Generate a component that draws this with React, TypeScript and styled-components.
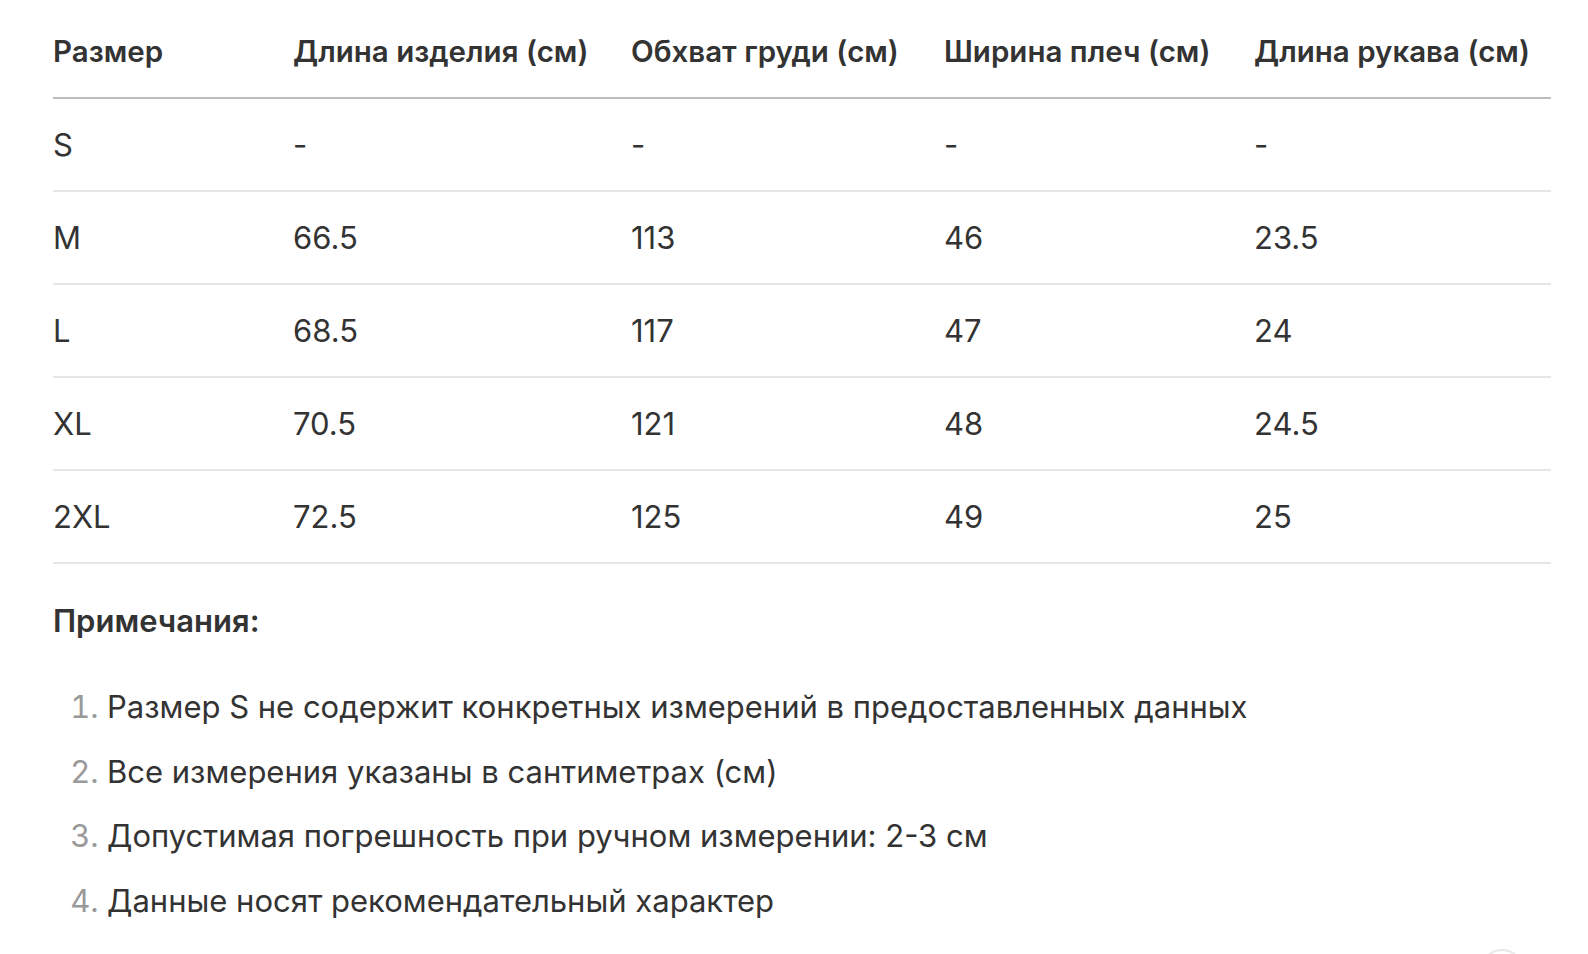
import React from "react";
import styled, { createGlobalStyle } from "styled-components";

const Global = createGlobalStyle`
  html, body { margin: 0; padding: 0; background: #fff; }
  body { font-family: Inter, "Noto Sans", "Liberation Sans", sans-serif; color: #333; overflow: hidden; }
`;

const Page = styled.div`
  position: relative;
  width: 1588px;
  height: 954px;
  box-sizing: border-box;
  padding: 0 37px 0 53px;
  overflow: hidden;
`;

const Table = styled.table`
  width: 100%;
  border-collapse: collapse;
  table-layout: fixed;
`;

const Col = styled.col<{ $w: number }>`
  width: ${(p) => p.$w}px;
`;

const Th = styled.th`
  text-align: left;
  font-size: 29.5px;
  font-weight: 600;
  line-height: 38px;
  color: #333;
  padding: 32px 0 27px;
  border-bottom: 2px solid #bdbdbd;
  white-space: nowrap;
`;

const Td = styled.td`
  font-size: 31px;
  font-weight: 400;
  line-height: 38px;
  color: #333;
  padding: 27px 0 26px;
  border-bottom: 2px solid #e6e6e6;
`;

const NotesTitle = styled.h3`
  margin: 38px 0 0;
  font-size: 31px;
  font-weight: 600;
  line-height: 38px;
  color: #333;
`;

const List = styled.ol`
  margin: 48px 0 0;
  padding-left: 54px;
  display: flex;
  flex-direction: column;
  gap: 26.7px;
  li::marker { color: #999; }
`;

const Item = styled.li`
  font-size: 31px;
  line-height: 38px;
  color: #333;
`;

const ScrollBtn = styled.div`
  position: absolute;
  left: 1480px;
  top: 949px;
  width: 40px;
  height: 40px;
  border-radius: 50%;
  border: 2px solid #e8e8e8;
  background: #fff;
`;

const rows = [
  ["S", "-", "-", "-", "-"],
  ["M", "66.5", "113", "46", "23.5"],
  ["L", "68.5", "117", "47", "24"],
  ["XL", "70.5", "121", "48", "24.5"],
  ["2XL", "72.5", "125", "49", "25"],
];

const headers = [
  "Размер",
  "Длина изделия (см)",
  "Обхват груди (см)",
  "Ширина плеч (см)",
  "Длина рукава (см)",
];

const widths = [240, 338, 313, 310, 297];

const notes = [
  "Размер S не содержит конкретных измерений в предоставленных данных",
  "Все измерения указаны в сантиметрах (см)",
  "Допустимая погрешность при ручном измерении: 2-3 см",
  "Данные носят рекомендательный характер",
];

export default function App() {
  return (
    <>
      <Global />
      <Page>
        <Table>
          <colgroup>
            {widths.map((w, i) => (
              <Col key={i} $w={w} />
            ))}
          </colgroup>
          <thead>
            <tr>
              {headers.map((h) => (
                <Th key={h}>{h}</Th>
              ))}
            </tr>
          </thead>
          <tbody>
            {rows.map((r) => (
              <tr key={r[0]}>
                {r.map((c, i) => (
                  <Td key={i}>{c}</Td>
                ))}
              </tr>
            ))}
          </tbody>
        </Table>
        <NotesTitle>Примечания:</NotesTitle>
        <List>
          {notes.map((n) => (
            <Item key={n}>{n}</Item>
          ))}
        </List>
        <ScrollBtn />
      </Page>
    </>
  );
}
